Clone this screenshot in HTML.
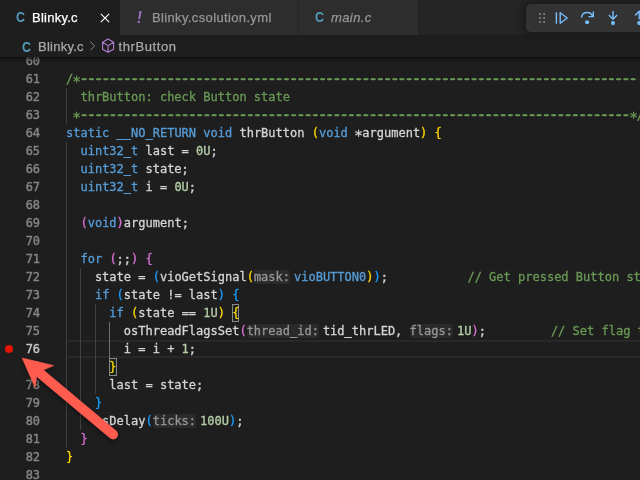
<!DOCTYPE html>
<html><head><meta charset="utf-8"><title>Blinky.c</title>
<style>
html,body{margin:0;padding:0;background:#1e1e1e;}
body{width:640px;height:480px;overflow:hidden;position:relative;font-family:"Liberation Sans",sans-serif;font-size:13px;color:#ccc;}
#tabs{will-change:transform;position:absolute;left:0;top:0;width:640px;height:35px;background:#252526;}
.tab{position:absolute;top:0;height:35px;background:#2d2d2d;color:#969696;line-height:35px;white-space:nowrap;}
.tab.active{background:#1e1e1e;color:#fff;}
.tab .ic{position:absolute;top:0;font-weight:bold;font-size:14px;transform:scaleX(.89);transform-origin:0 50%;}
.tab .lb{position:absolute;top:0;-webkit-text-stroke:.25px;}
#crumbs{will-change:transform;position:absolute;left:0;top:35px;width:640px;height:22px;background:#1e1e1e;line-height:22px;color:#a9a9a9;white-space:nowrap;}
#crumbs span{position:absolute;top:1px;-webkit-text-stroke:.25px;}
#shadow{position:absolute;left:0;top:57px;width:640px;height:6px;box-shadow:#000 0 6px 6px -6px inset;z-index:5}
#ed{will-change:transform;position:absolute;left:0;top:57px;width:640px;height:423px;overflow:hidden;background:#1e1e1e;}
.ln{-webkit-text-stroke:.4px;position:absolute;left:0;width:40.1px;text-align:right;height:18px;line-height:18px;font-family:"DejaVu Sans Mono","Liberation Mono",monospace;font-size:12px;color:#858585;}
.ln.cur{color:#c6c6c6;}
.l{position:absolute;left:66px;height:18px;line-height:18px;white-space:pre;font-family:"DejaVu Sans Mono","Liberation Mono",monospace;font-size:12px;color:#d4d4d4;-webkit-text-stroke:.3px;}
.c{color:#6a9955}.k{color:#569cd6}.n{color:#b5cea8}.t{color:#d4d4d4}
.b1{color:#ffd700}.b2{color:#da70d6}.b3{color:#179fff}
.bm{box-shadow:inset 0 0 0 1px #888;background:rgba(0,100,0,.1);display:inline-block;height:18px;}
.h{font-size:12px;color:#969696;background:#2a2a2a;border-radius:3px;margin-right:4px;}
.s{position:relative;top:2px;display:inline-block;transform:scale(1.2);}
.d{text-shadow:-1px 0 0 #6a9955,1px 0 0 #6a9955,-1px -1px 0 rgba(106,153,85,.5),1px -1px 0 rgba(106,153,85,.5),0 -1px 0 rgba(106,153,85,.5);}
.g{position:absolute;width:1px;background:#404040;}
.g.a{background:#707070;}
#curline{position:absolute;left:66px;width:574px;top:283px;height:14px;border-top:2px solid #282828;border-bottom:2px solid #282828;}
#bp{position:absolute;left:4.7px;top:287.7px;width:8.4px;height:8.4px;border-radius:50%;background:#e51400;}
#dbg{position:absolute;left:526.2px;top:4px;width:130px;height:28px;background:#333;border-radius:5px;box-shadow:0 0 8px 2px rgba(0,0,0,.36);z-index:10;}
#arrow{position:absolute;left:0;top:0;z-index:20;}
</style></head><body>
<div id="tabs">
<div class="tab active" style="left:0;width:119.5px"><span class="ic" style="left:15.5px;color:#519aba">C</span><span class="lb" style="left:32px;letter-spacing:.25px">Blinky.c</span>
<svg style="position:absolute;left:100px;top:13px" width="10" height="10" viewBox="0 0 10 10"><path d="M0.8 0.8 L9.2 9.2 M9.2 0.8 L0.8 9.2" stroke="#fff" stroke-width="1.1" fill="none"/></svg></div>
<div class="tab" style="left:119.5px;width:178.5px"><span class="ic" style="left:17.8px;top:0px;color:#a074c4;font-style:italic;font-size:17px;transform:scaleX(.85)">!</span><span class="lb" style="left:32.5px;letter-spacing:.36px">Blinky.csolution.yml</span></div>
<div class="tab" style="left:299px;width:119px"><span class="ic" style="left:16px;color:#519aba">C</span><span class="lb" style="left:32px;font-style:italic;letter-spacing:.4px">main.c</span></div>
</div>
<div id="crumbs"><span style="left:22px;color:#519aba;font-weight:bold;font-size:14px;transform:scaleX(.89);transform-origin:0 50%;-webkit-text-stroke:0">C</span><span style="left:38px;letter-spacing:.25px">Blinky.c</span><svg style="position:absolute;left:88px;top:5px" width="9" height="12" viewBox="0 0 9 12"><path d="M2.3 1.6 L6.7 5.9 L2.3 10.2" stroke="#8c8c8c" stroke-width="1" fill="none"/></svg>
<svg style="position:absolute;left:101px;top:3px" width="16" height="16" viewBox="0 0 16 16"><path d="M7.1 1.1 L12.6 4.2 V11.2 L7.1 14.3 L1.6 11.2 V4.2 Z M1.6 4.2 L7.1 7.6 L12.6 4.2 M7.1 7.6 V14.3" stroke="#b180d7" stroke-width="1.1" fill="none" stroke-linejoin="round"/></svg>
<span style="left:118.6px;letter-spacing:.58px">thrButton</span></div>
<div id="shadow"></div>
<div id="dbg">
<svg width="130" height="28" viewBox="526.1 4 130 28">
<g fill="#8c8c8c"><rect x="539.2" y="13.2" width="1.7" height="1.7"/><rect x="543.4" y="13.2" width="1.7" height="1.7"/><rect x="539.2" y="17.2" width="1.7" height="1.7"/><rect x="543.4" y="17.2" width="1.7" height="1.7"/><rect x="539.2" y="21.2" width="1.7" height="1.7"/><rect x="543.4" y="21.2" width="1.7" height="1.7"/></g>
<g stroke="#75beff" fill="none" stroke-width="1.4">
<path d="M556.5 12.3 V23.7"/><path d="M560.3 12.8 L567.3 18 L560.3 23.2 Z" stroke-linejoin="round"/>
<path d="M581.6 17.6 A5.7 5.7 0 0 1 592.6 16.2 M593.4 11.6 V16.6 H588.6"/>
<path d="M613.1 11 V19 M609 15 L613.1 19.2 L617.2 15"/>
<path d="M639.3 19.6 V11.4 M635.2 15.5 L639.3 11.3 L643.4 15.5"/>
</g>
<g fill="#75beff"><circle cx="587.2" cy="22.2" r="2.05"/><circle cx="613.1" cy="23.1" r="2.05"/><circle cx="639.3" cy="23.1" r="2.05"/></g>
</svg></div>
<div id="ed">
<div id="curline"></div>
<div class="g " style="left:66.0px;top:31px;height:36px"></div>
<div class="g " style="left:66.0px;top:85px;height:306px"></div>
<div class="g " style="left:80.0px;top:211px;height:162px"></div>
<div class="g " style="left:95.0px;top:247px;height:90px"></div>
<div class="g a" style="left:109.0px;top:265px;height:36px"></div>
<div id="bp"></div>
<div class="ln" style="top:-5px">60</div>
<div class="ln" style="top:13px">61</div><div class="l" style="top:13px"><span class="c">/</span><span class="c s">*</span><span class="c d">-----------------------------------------------------------------------------</span></div>
<div class="ln" style="top:31px">62</div><div class="l" style="top:31px"><span class="c">  thrButton: check Button state</span></div>
<div class="ln" style="top:49px">63</div><div class="l" style="top:49px"><span class="c"> </span><span class="c s">*</span><span class="c d">----------------------------------------------------------------------------</span><span class="c s">*</span><span class="c">/</span></div>
<div class="ln" style="top:67px">64</div><div class="l" style="top:67px"><span class="k">static</span><span class="t"> </span><span class="k">__NO_RETURN</span><span class="t"> </span><span class="k">void</span><span class="t"> thrButton </span><span class="b1">(</span><span class="k">void</span><span class="t"> </span><span class="t s">*</span><span class="t">argument</span><span class="b1">)</span><span class="t"> </span><span class="b1">{</span></div>
<div class="ln" style="top:85px">65</div><div class="l" style="top:85px"><span class="t">  </span><span class="k">uint32_t</span><span class="t"> last = </span><span class="n">0U</span><span class="t">;</span></div>
<div class="ln" style="top:103px">66</div><div class="l" style="top:103px"><span class="t">  </span><span class="k">uint32_t</span><span class="t"> state;</span></div>
<div class="ln" style="top:121px">67</div><div class="l" style="top:121px"><span class="t">  </span><span class="k">uint32_t</span><span class="t"> i = </span><span class="n">0U</span><span class="t">;</span></div>
<div class="ln" style="top:139px">68</div>
<div class="ln" style="top:157px">69</div><div class="l" style="top:157px"><span class="t">  </span><span class="b2">(</span><span class="k">void</span><span class="b2">)</span><span class="t">argument;</span></div>
<div class="ln" style="top:175px">70</div>
<div class="ln" style="top:193px">71</div><div class="l" style="top:193px"><span class="t">  </span><span class="k">for</span><span class="t"> </span><span class="b2">(</span><span class="t">;;</span><span class="b2">)</span><span class="t"> </span><span class="b2">{</span></div>
<div class="ln" style="top:211px">72</div><div class="l" style="top:211px"><span class="t">    state = </span><span class="b3">(</span><span class="t">vioGetSignal</span><span class="b1">(</span><span class="h">mask:</span><span class="k">vioBUTTON0</span><span class="b1">)</span><span class="b3">)</span><span class="t">;</span><span class="t">           </span><span class="c">// Get pressed Button state</span></div>
<div class="ln" style="top:229px">73</div><div class="l" style="top:229px"><span class="t">    </span><span class="k">if</span><span class="t"> </span><span class="b3">(</span><span class="t">state != last</span><span class="b3">)</span><span class="t"> </span><span class="b3">{</span></div>
<div class="ln" style="top:247px">74</div><div class="l" style="top:247px"><span class="t">      </span><span class="k">if</span><span class="t"> </span><span class="b1">(</span><span class="t">state == </span><span class="n">1U</span><span class="b1">)</span><span class="t"> </span><span class="b1 bm">{</span></div>
<div class="ln" style="top:265px">75</div><div class="l" style="top:265px"><span class="t">        osThreadFlagsSet</span><span class="b2">(</span><span class="h">thread_id:</span><span class="t">tid_thrLED, </span><span class="h">flags:</span><span class="n">1U</span><span class="b2">)</span><span class="t">;</span><span class="t">         </span><span class="c">// Set flag to thrLED</span></div>
<div class="ln cur" style="top:283px">76</div><div class="l" style="top:283px"><span class="t">        i = i + </span><span class="n">1</span><span class="t">;</span></div>
<div class="ln" style="top:301px">77</div><div class="l" style="top:301px"><span class="t">      </span><span class="b1 bm">}</span></div>
<div class="ln" style="top:319px">78</div><div class="l" style="top:319px"><span class="t">      last = state;</span></div>
<div class="ln" style="top:337px">79</div><div class="l" style="top:337px"><span class="t">    </span><span class="b3">}</span></div>
<div class="ln" style="top:355px">80</div><div class="l" style="top:355px"><span class="t">    osDelay</span><span class="b3">(</span><span class="h">ticks:</span><span class="n">100U</span><span class="b3">)</span><span class="t">;</span></div>
<div class="ln" style="top:373px">81</div><div class="l" style="top:373px"><span class="t">  </span><span class="b2">}</span></div>
<div class="ln" style="top:391px">82</div><div class="l" style="top:391px"><span class="b1">}</span></div>
<div class="ln" style="top:409px">83</div>
<div class="ln" style="top:427px">84</div>
</div>
<svg id="arrow" width="640" height="480" viewBox="0 0 640 480">
<defs><filter id="ds" x="-20%" y="-20%" width="140%" height="140%"><feGaussianBlur in="SourceAlpha" stdDeviation="2.5"/><feOffset dx="0" dy="2"/><feComponentTransfer><feFuncA type="linear" slope="0.5"/></feComponentTransfer><feMerge><feMergeNode/><feMergeNode in="SourceGraphic"/></feMerge></filter></defs>
<g filter="url(#ds)" fill="#ff5b4f" stroke="#ff5b4f" stroke-linejoin="round">
<path d="M113.2 434.5 L41 374.0" stroke-width="9.6" stroke-linecap="round" fill="none"/>
<path d="M22.25 358.1 L53.5 365.6 L43.75 369.75 L36.5 376.6 L35 387.25 Z" stroke-width="0.6"/>
</g></svg>
</body></html>
